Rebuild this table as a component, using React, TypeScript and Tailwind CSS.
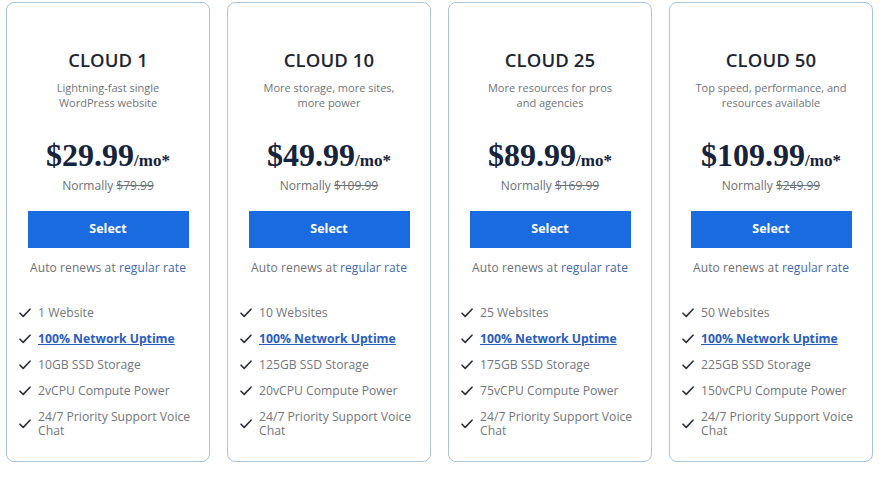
import React from "react";

type Plan = {
  name: string;
  desc: [string, string];
  price: string;
  normal: string;
  features: string[];
};

const plans: Plan[] = [
  { name: "CLOUD 1", desc: ["Lightning-fast single", "WordPress website"], price: "$29.99", normal: "$79.99", features: ["1 Website", "10GB SSD Storage", "2vCPU Compute Power"] },
  { name: "CLOUD 10", desc: ["More storage, more sites,", "more power"], price: "$49.99", normal: "$109.99", features: ["10 Websites", "125GB SSD Storage", "20vCPU Compute Power"] },
  { name: "CLOUD 25", desc: ["More resources for pros", "and agencies"], price: "$89.99", normal: "$169.99", features: ["25 Websites", "175GB SSD Storage", "75vCPU Compute Power"] },
  { name: "CLOUD 50", desc: ["Top speed, performance, and", "resources available"], price: "$109.99", normal: "$249.99", features: ["50 Websites", "225GB SSD Storage", "150vCPU Compute Power"] },
];

function Check() {
  return (
    <svg width="12" height="10" viewBox="0 0 12 10" fill="none" className="shrink-0">
      <path d="M1 5.2 L4.2 8.4 L11 1.2" stroke="#2b2f36" strokeWidth="1.6" strokeLinecap="round" strokeLinejoin="round" />
    </svg>
  );
}

function Feature({ children }: { children: React.ReactNode }) {
  return (
    <li className="flex items-center gap-[7px]">
      <Check />
      <span>{children}</span>
    </li>
  );
}

function Card({ p }: { p: Plan }) {
  return (
    <div className="w-[204px] h-[460px] shrink-0 rounded-[8px] border border-[#a9c3da] bg-white flex flex-col items-center pt-[45px]">
      <div className="text-[18.5px] leading-[24px] font-semibold text-[#1c2633] tracking-[0.1px]">{p.name}</div>
      <div className="mt-[8px] text-[11px] leading-[15px] text-[#6f747c] text-center">
        <div>{p.desc[0]}</div>
        <div>{p.desc[1]}</div>
      </div>
      <div className="mt-[26px] h-[38px] flex items-baseline text-[#15233d] font-bold" style={{ fontFamily: '"Liberation Serif", "Times New Roman", serif' }}>
        <span className="text-[32px] leading-[38px]">{p.price}</span>
        <span className="text-[17px]">/mo*</span>
      </div>
      <div className="mt-[4px] text-[12px] leading-[16px] text-[#6c7077]">
        Normally <span className="line-through">{p.normal}</span>
      </div>
      <button className="mt-[17px] w-[161px] h-[37px] bg-[#1a6be0] text-white text-[12.5px] font-bold">Select</button>
      <div className="mt-[12px] text-[12px] leading-[16px] text-[#6c7077] tracking-[0.1px]">
        Auto renews at <span className="text-[#3e68b3]">regular rate</span>
      </div>
      <ul className="mt-[30px] self-stretch pl-[12px] pr-[6px] flex flex-col gap-[12px] text-[12.2px] leading-[14px] text-[#72767d]">
        <Feature>{p.features[0]}</Feature>
        <Feature>
          <span className="font-bold text-[#2a5cc0] underline">100% Network Uptime</span>
        </Feature>
        <Feature>{p.features[1]}</Feature>
        <Feature>{p.features[2]}</Feature>
        <Feature>24/7 Priority Support Voice Chat</Feature>
      </ul>
    </div>
  );
}

export default function App() {
  return (
    <div className="w-[880px] h-[477px] bg-white flex gap-[17px] pl-[6px] pt-[2px]" style={{ fontFamily: '"Open Sans", "DejaVu Sans", sans-serif' }}>
      {plans.map((p) => (
        <Card key={p.name} p={p} />
      ))}
    </div>
  );
}
